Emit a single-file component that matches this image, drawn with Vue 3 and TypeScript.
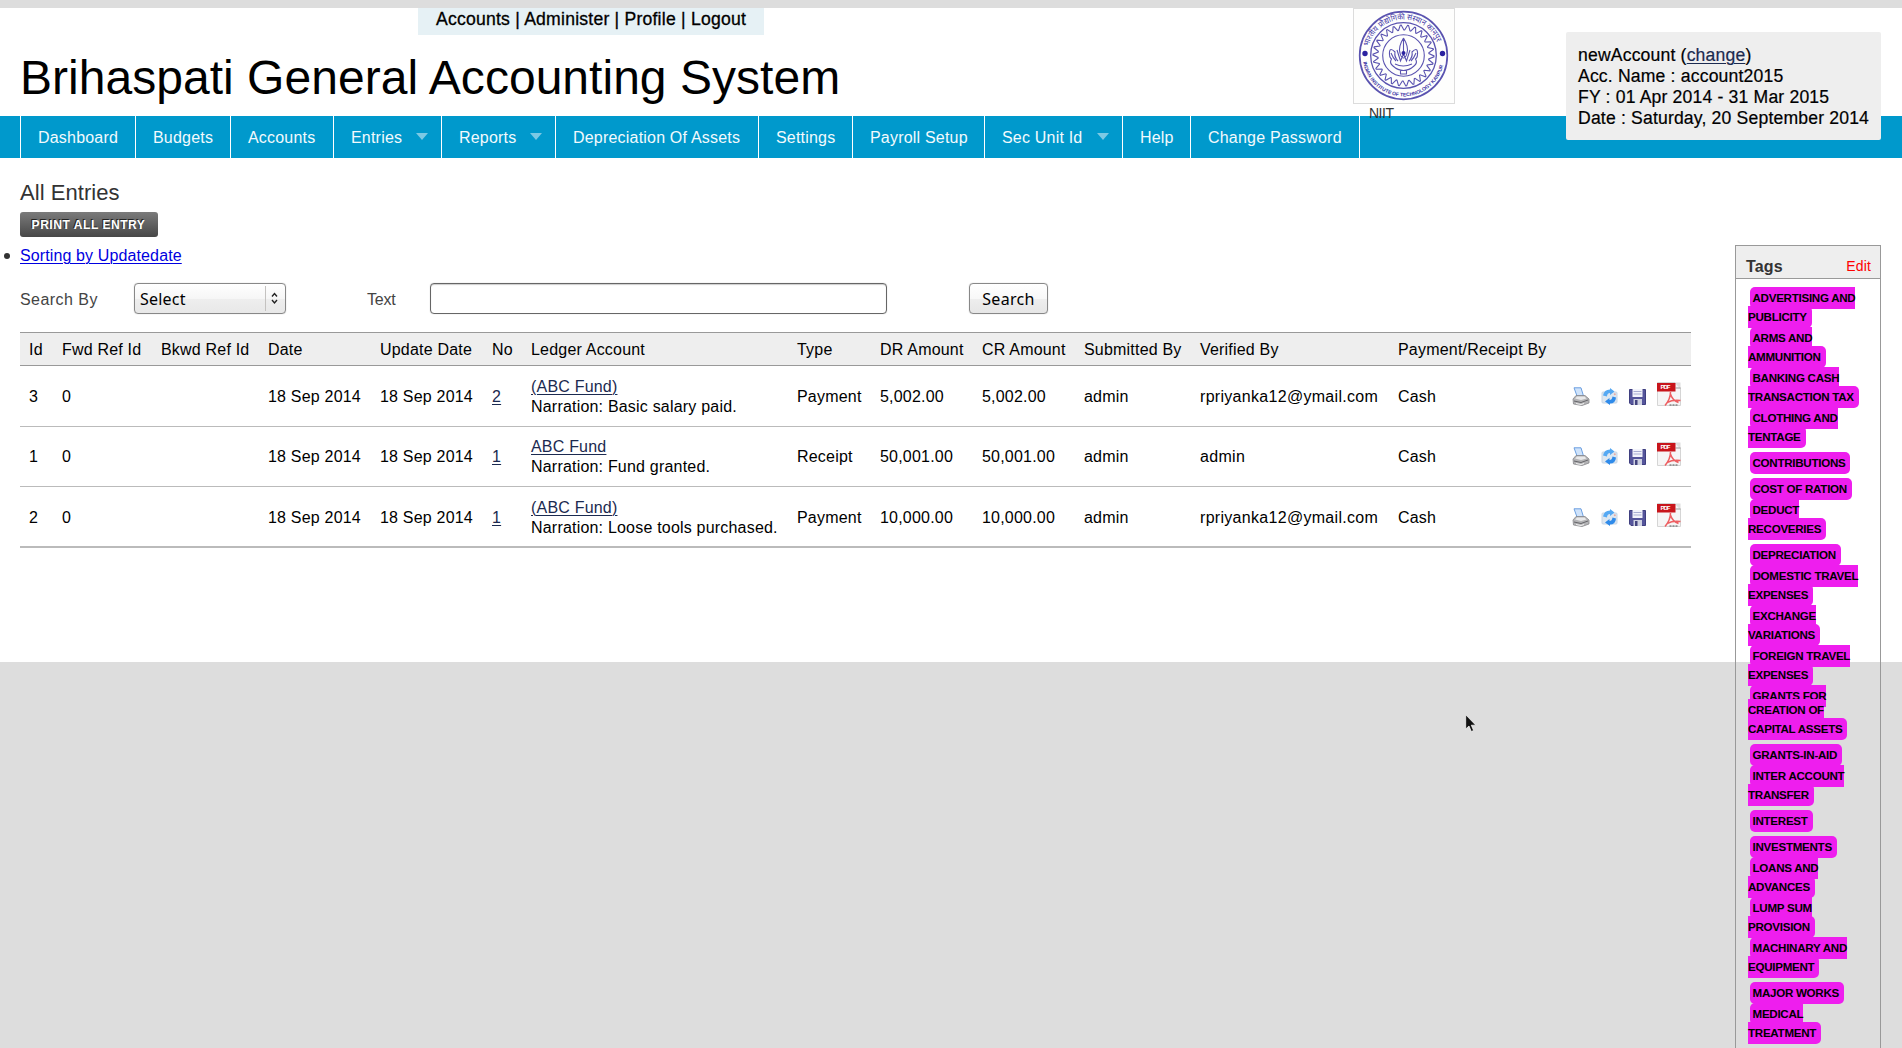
<script setup lang="ts">
interface MenuItem { label: string; width: number; arrow?: boolean }
interface Entry {
  id: number; fwd: string; date: string; updated: string; no: string
  ledger: string; narration: string; type: string; dr: string; cr: string
  submitted: string; verified: string; mode: string
}

const menu: MenuItem[] = [
  { label: 'Dashboard', width: 115 },
  { label: 'Budgets', width: 95 },
  { label: 'Accounts', width: 103 },
  { label: 'Entries', width: 108, arrow: true },
  { label: 'Reports', width: 114, arrow: true },
  { label: 'Depreciation Of Assets', width: 203 },
  { label: 'Settings', width: 94 },
  { label: 'Payroll Setup', width: 132 },
  { label: 'Sec Unit Id', width: 138, arrow: true },
  { label: 'Help', width: 68 },
  { label: 'Change Password', width: 170 },
]

const columns: { title: string; width: number }[] = [
  { title: 'Id', width: 33 },
  { title: 'Fwd Ref Id', width: 99 },
  { title: 'Bkwd Ref Id', width: 107 },
  { title: 'Date', width: 112 },
  { title: 'Update Date', width: 112 },
  { title: 'No', width: 39 },
  { title: 'Ledger Account', width: 266 },
  { title: 'Type', width: 83 },
  { title: 'DR Amount', width: 102 },
  { title: 'CR Amount', width: 102 },
  { title: 'Submitted By', width: 116 },
  { title: 'Verified By', width: 198 },
  { title: 'Payment/Receipt By', width: 174 },
  { title: '', width: 128 },
]

const entries: Entry[] = [
  { id: 3, fwd: '0', date: '18 Sep 2014', updated: '18 Sep 2014', no: '2', ledger: '(ABC Fund)', narration: 'Basic salary paid.', type: 'Payment', dr: '5,002.00', cr: '5,002.00', submitted: 'admin', verified: 'rpriyanka12@ymail.com', mode: 'Cash' },
  { id: 1, fwd: '0', date: '18 Sep 2014', updated: '18 Sep 2014', no: '1', ledger: 'ABC Fund', narration: 'Fund granted.', type: 'Receipt', dr: '50,001.00', cr: '50,001.00', submitted: 'admin', verified: 'admin', mode: 'Cash' },
  { id: 2, fwd: '0', date: '18 Sep 2014', updated: '18 Sep 2014', no: '1', ledger: '(ABC Fund)', narration: 'Loose tools purchased.', type: 'Payment', dr: '10,000.00', cr: '10,000.00', submitted: 'admin', verified: 'rpriyanka12@ymail.com', mode: 'Cash' },
]

const tags: string[][] = [
  ['ADVERTISING AND', 'PUBLICITY'],
  ['ARMS AND', 'AMMUNITION'],
  ['BANKING CASH', 'TRANSACTION TAX'],
  ['CLOTHING AND', 'TENTAGE'],
  ['CONTRIBUTIONS'],
  ['COST OF RATION'],
  ['DEDUCT', 'RECOVERIES'],
  ['DEPRECIATION'],
  ['DOMESTIC TRAVEL', 'EXPENSES'],
  ['EXCHANGE', 'VARIATIONS'],
  ['FOREIGN TRAVEL', 'EXPENSES'],
  ['GRANTS FOR', 'CREATION OF', 'CAPITAL ASSETS'],
  ['GRANTS-IN-AID'],
  ['INTER ACCOUNT', 'TRANSFER'],
  ['INTEREST'],
  ['INVESTMENTS'],
  ['LOANS AND', 'ADVANCES'],
  ['LUMP SUM', 'PROVISION'],
  ['MACHINARY AND', 'EQUIPMENT'],
  ['MAJOR WORKS'],
  ['MEDICAL', 'TREATMENT'],
]

// Cog ring of the institute seal
const teeth = 26
const cog = Array.from({ length: teeth * 4 }, (_, i) => {
  const r = i % 4 < 2 ? 30.5 : 25.5
  const a = ((i + (i % 2 ? -0.25 : 0.25)) / (teeth * 4)) * Math.PI * 2
  return `${(50.5 + r * Math.cos(a)).toFixed(2)},${(47.5 + r * Math.sin(a)).toFixed(2)}`
}).join(' ')
</script>

<template>
  <div class="page">
    <div class="sheet">
      <header class="head">
        <div class="toplinks">Accounts | Administer | Profile | Logout</div>
        <h1>Brihaspati General Accounting System</h1>
        <div class="seal">
          <svg width="102" height="96" viewBox="0 0 102 96">
            <rect x=".5" y=".5" width="101" height="95" fill="#fefefd" stroke="#dcdcdc" />
            <g fill="none" stroke="#5a53b0">
              <circle cx="50.5" cy="47.5" r="43.8" stroke-width="1.7" />
              <circle cx="50.5" cy="47.5" r="32.8" stroke-width="1.3" />
              <polygon :points="cog" stroke-width="1.1" />
              <circle cx="50.5" cy="47.5" r="20.8" stroke-width="1.1" />
              <path stroke-width="1.1" d="M50.5 30 Q45 39 47 45 Q48 50 50.5 50 Q53 50 54 45 Q56 39 50.5 30 M50.5 30V44 M45 53 Q41 49 42 44 Q37 39 36.5 44 Q36 49 38.5 51 Q36 55 40 58 Q45 62.5 50.5 62.5 Q56 62.5 61 58 Q65 55 62.5 51 Q65 49 64.5 44 Q64 39 59 44 Q60 49 56 53 M44 42L47.5 53L50.5 46L53.5 53L57 42 M38 45Q40 50 43 53 M63 45Q61 50 58 53 M47.5 62V66H53.5V62 M42 56Q50 60 59 56" />
            </g>
            <circle cx="50.5" cy="45" r="2" fill="#2b22a0" />
            <circle cx="12" cy="45.5" r="2.7" fill="#2b22a0" />
            <circle cx="89.5" cy="45.5" r="2.7" fill="#2b22a0" />
            <path id="arc-top" d="M15.5 38.5 A36.2 36.2 0 0 1 85.5 38.5" fill="none" />
            <path id="arc-bottom" d="M10.2 54 A40.8 40.8 0 0 0 90.8 54" fill="none" />
            <text class="seal-hi" textLength="90" lengthAdjust="spacingAndGlyphs"><textPath href="#arc-top">भारतीय प्रौद्योगिकी संस्थान कानपुर</textPath></text>
            <text class="seal-en"><textPath href="#arc-bottom" textLength="112" lengthAdjust="spacingAndGlyphs">INDIAN INSTITUTE OF TECHNOLOGY KANPUR</textPath></text>
          </svg>
          <span class="seal-label">NIIT</span>
        </div>
        <div class="info">
          newAccount (<a>change</a>)<br>
          Acc. Name : account2015<br>
          FY : 01 Apr 2014 - 31 Mar 2015<br>
          Date : Saturday, 20 September 2014
        </div>
      </header>

      <nav class="nav">
        <div v-for="m in menu" :key="m.label" class="item" :style="{ width: m.width + 'px' }">
          <span>{{ m.label }}</span><i v-if="m.arrow" class="arrow"></i>
        </div>
      </nav>

      <div class="body">
        <main class="main">
          <h2>All Entries</h2>
          <button class="print">PRINT ALL ENTRY</button>
          <div class="sort"><i class="bullet"></i><a>Sorting by Updatedate</a></div>
          <div class="search">
            <label class="by">Search By</label>
            <div class="select">
              <span>Select</span>
              <svg width="20" height="29" viewBox="0 0 20 29"><path d="M.5 2V27" stroke="#c4c2c0" /><path d="M7 12.500L9.500 9.500L12 12.500M7 16L9.500 19L12 16" fill="none" stroke="#222" stroke-width="1.400" /></svg>
            </div>
            <label class="txt">Text</label>
            <div class="field"></div>
            <button class="go">Search</button>
          </div>

          <table>
            <colgroup><col v-for="(c, i) in columns" :key="i" :style="{ width: c.width + 'px' }"></colgroup>
            <thead><tr><th v-for="(c, i) in columns" :key="i">{{ c.title }}</th></tr></thead>
            <tbody>
              <tr v-for="e in entries" :key="e.id">
                <td>{{ e.id }}</td><td>{{ e.fwd }}</td><td></td>
                <td>{{ e.date }}</td><td>{{ e.updated }}</td>
                <td><a>{{ e.no }}</a></td>
                <td><a>{{ e.ledger }}</a><br>Narration: {{ e.narration }}</td>
                <td>{{ e.type }}</td><td>{{ e.dr }}</td><td>{{ e.cr }}</td>
                <td>{{ e.submitted }}</td><td class="mail">{{ e.verified }}</td><td>{{ e.mode }}</td>
                <td class="actions">
                  <div class="icons">
                    <svg width="18" height="19" viewBox="0 0 18 19">
                      <path d="M2 .8H9L11.500 9H5Z" fill="#cfe3fb" stroke="#6b9fe0" />
                      <path d="M1 12L4 8.500H13L17 12V16L10 18.500L1.500 17Z" fill="#b4b4b6" stroke="#88888c" stroke-width=".8" />
                      <path d="M3 11.500L5 9.500H12.500L14.500 11.500L9 13Z" fill="#e9e9ea" />
                      <path d="M2 14L9 15.500L16 13" stroke="#66666a" fill="none" />
                      <path d="M4 16.500L9 17.500L12 16.500" stroke="#f2f2f2" fill="none" />
                    </svg>
                    <svg width="17" height="17" viewBox="0 0 17 17">
                      <rect x="1" y="4" width="15" height="11" rx="1" fill="#dde7f1" stroke="#c8d5e4" />
                      <path d="M2 7.500Q3 1.500 9 1.500L9 0L13.500 3.500L9 7V5Q6 5 6 8.500Z" fill="#56a9f3" />
                      <path d="M15 9.500Q14.500 15.500 9 15.500V17L4 13.500L8.500 10V12Q11 12 11.500 8.500Z" fill="#2f8bea" />
                      <circle cx="13.800" cy="6.300" r="1" fill="#e7aaa0" />
                    </svg>
                    <svg width="17" height="16" viewBox="0 0 17 16">
                      <path d="M.5 .5H16.500V15.500H2L.5 14Z" fill="#55559b" stroke="#3f3f80" />
                      <rect x="3.500" y="0" width="10" height="8" fill="#f3f4fb" />
                      <path d="M4.500 2.500H12.500M4.500 5H12.500" stroke="#a9aed2" />
                      <rect x="4.500" y="10" width="8.500" height="6" fill="#cfd2e2" />
                      <rect x="6" y="11" width="2.500" height="5" fill="#44447f" />
                    </svg>
                    <svg width="24" height="24" viewBox="0 0 24 24">
                      <path d="M.5 .5H18L23.500 6V23.500H.5Z" fill="#f6f6f6" stroke="#d5d5d5" />
                      <path d="M18 .5H23.500V6Z" fill="#dedede" />
                      <path d="M18.500 6H23.500" stroke="#999" />
                      <rect x="0" y="1" width="18.500" height="8.500" fill="#c8151b" />
                      <text x="3.500" y="7.300" font-size="6" font-weight="700" fill="#fff" textLength="10">PDF</text>
                      <path d="M13.500 10Q13.500 17 8 23.500M13.500 12Q15 18 21.500 20.500M10 20.500Q16 17.500 23.500 18.500" fill="none" stroke="#ee5f62" stroke-width="1.500" />
                      <path d="M12.500 23H21" stroke="#555" stroke-dasharray="2 1" />
                    </svg>
                  </div>
                </td>
              </tr>
            </tbody>
          </table>
        </main>

        <aside class="side">
          <div class="side-head"><b>Tags</b><a>Edit</a></div>
          <div class="tags">
            <div v-for="t in tags" :key="t.join(' ')" class="tag" :class="{ single: t.length === 1 }">
              <span v-for="(line, i) in t" :key="line" :class="{ first: i === 0, last: i === t.length - 1, tight: i === 1 && t.length === 3 }">{{ line }}</span>
            </div>
          </div>
        </aside>
      </div>
    </div>
    <svg class="cursor" width="12" height="19" viewBox="0 0 12 19"><path d="M.7 .8V15L4 12L6.300 17.500L8.600 16.500L6.300 11.200H10.800Z" fill="#111" stroke="#fff" stroke-width=".7" /></svg>
  </div>
</template>

<style>
body { background: #ddd; overflow: hidden; }
</style>

<style scoped>
.page { position: relative; box-sizing: border-box; height: 1048px; padding-top: 8px; background: #ddd; overflow: hidden; font-family: "Liberation Sans", Arial, sans-serif; font-size: 16px; letter-spacing: .16px; color: #333; }
.sheet { height: 654px; background: #fff; }
.head { position: relative; height: 108px; }
.toplinks { box-sizing: border-box; width: 346px; height: 27px; margin-left: 418px; padding-left: 18px; line-height: 23px; background: #e6f1f5; color: #000; font-size: 17.6px; letter-spacing: .22px; white-space: nowrap; -webkit-text-stroke: .3px #000; }
h1 { margin: 15px 0 0 20px; color: #000; font-size: 48px; font-weight: 400; line-height: 56px; letter-spacing: .03px; }
.seal { position: absolute; left: 1353px; top: 0; z-index: 2; display: flex; flex-direction: column; }
.seal-label { margin: 1px 0 0 16px; font-size: 14px; line-height: 16px; letter-spacing: -.5px; }
.seal-hi { font: 8px "Noto Sans", sans-serif; fill: #3a32a4; letter-spacing: 0; }
.seal-en { font: 700 5px "Liberation Sans", sans-serif; fill: #3a32a4; letter-spacing: 0; }
.info { position: absolute; left: 1566px; top: 24px; z-index: 2; box-sizing: border-box; width: 315px; height: 108px; padding: 13px 12px 0; line-height: 21px; background: #eee; border-radius: 2px; color: #000; font-size: 17.6px; letter-spacing: .17px; white-space: nowrap; -webkit-text-stroke: .2px; }
a { color: #1b2a50; text-decoration: underline; text-underline-offset: 2px; text-decoration-thickness: 1px; }
.nav { display: flex; height: 42px; padding-left: 20px; background: #09c; }
.item { box-sizing: border-box; display: flex; align-items: center; justify-content: space-between; padding: 2px 13px 0 17px; border-left: 1px solid #fff; color: #f2fafd; white-space: nowrap; letter-spacing: .2px; }
.item:last-child { border-right: 1px solid #fff; }
.arrow { margin-top: -3px; border: 6px solid transparent; border-top: 7px solid #7cc9e4; border-bottom: 0; }
.body { display: flex; align-items: flex-start; }
.main { width: 1671px; padding-left: 20px; }
h2 { margin: 22px 0 0; font-size: 22px; font-weight: 400; line-height: 26px; letter-spacing: .05px; }
.print { display: block; margin: 6px 0 0; width: 138px; height: 25px; padding: 0 1px 0 0; border: 0; border-radius: 3px; background: linear-gradient(#7b7b7b, #474747); color: #fff; font: 700 12px "Liberation Sans", sans-serif; letter-spacing: .55px; text-shadow: -1px -1px 0 #222; }
.sort { display: flex; align-items: center; height: 20px; margin: 9px 0 0 -16px; letter-spacing: .12px; }
.sort a { color: #0000e0; }
.bullet { width: 6px; height: 6px; margin-right: 10px; border-radius: 50%; background: #333; }
.search { display: flex; align-items: center; height: 31px; margin-top: 17px; }
.search label { padding-top: 2px; color: #444; }
.by { width: 114px; letter-spacing: .45px; }
.select { box-sizing: border-box; display: flex; justify-content: space-between; align-items: center; width: 152px; height: 31px; padding-left: 5px; border: 1px solid #888; border-radius: 4px; background: linear-gradient(#fff, #f6f6f6 50%, #eee 51%, #e8e8e8); color: #000; font-family: "Noto Sans", sans-serif; letter-spacing: .2px; box-shadow: 0 0 1px #aaa; }
.txt { width: 63px; margin-left: 81px; letter-spacing: -.2px; }
.field { box-sizing: border-box; width: 457px; height: 31px; border: 1px solid #666; border-radius: 4px; box-shadow: inset 0 1px 1px #ccc, 0 0 1px #aaa; }
.go { width: 79px; height: 31px; margin-left: 82px; padding: 0; border: 1px solid #888; border-radius: 4px; background: linear-gradient(#fff, #f8f8f8 50%, #eee 51%, #e6e6e6); color: #000; font: 16px "Noto Sans", sans-serif; letter-spacing: .3px; box-shadow: 0 0 1px #aaa; }
table { width: 1671px; margin-top: 18px; table-layout: fixed; border-collapse: separate; border-spacing: 0; color: #000; line-height: 20px; letter-spacing: .2px; }
th { box-sizing: border-box; height: 34px; padding: 2px 0 0 9px; background: #eee; border-top: 1px solid #999; border-bottom: 1px solid #999; font-weight: 400; text-align: left; white-space: nowrap; }
td { box-sizing: border-box; height: 61px; padding: 2px 0 0 9px; border-bottom: 1px solid #bbb; white-space: nowrap; }
td.mail { letter-spacing: .3px; }
tr:nth-child(2) td { height: 60px; padding-top: 0; }
tr:last-child td { border-bottom-width: 2px; }
.icons { display: flex; align-items: flex-end; height: 24px; padding-bottom: 6px; }
.icons svg { flex: none; }
.icons svg:nth-child(2) { margin: 0 11px 1px 11px; }
.icons svg:nth-child(3) { margin: 0 11px 1px 0; }
.side { box-sizing: border-box; width: 146px; height: 900px; margin: 87px 0 0 44px; border: 1px solid #999; }
.side-head { display: flex; justify-content: space-between; align-items: baseline; box-sizing: border-box; height: 33px; padding: 11px 9px 0 10px; background: #eee; border-bottom: 1px solid #999; line-height: 20px; }
.side-head a { position: relative; top: -1px; color: #f00; font-size: 14px; text-decoration: none; }
.tags { padding: 9px 0 0 12px; color: #000; font-size: 11.6px; font-weight: 700; line-height: 22px; letter-spacing: -.28px; }
.tag { display: flex; flex-direction: column; align-items: flex-start; margin-top: -1px; }
.tag.single { margin-top: 4px; }
.tag span { height: 22px; margin-top: -3px; background: #ee1eee; white-space: nowrap; }
.tag .first { margin: 0 0 0 2px; padding-left: 2.5px; border-radius: 5px 0 0 5px; }
.tag .last { padding-right: 5px; border-radius: 0 5px 5px 0; }
.tag.single span { border-radius: 5px; }
.tag .tight { margin-top: -8px; }
.cursor { position: absolute; left: 1465px; top: 714px; }
</style>
